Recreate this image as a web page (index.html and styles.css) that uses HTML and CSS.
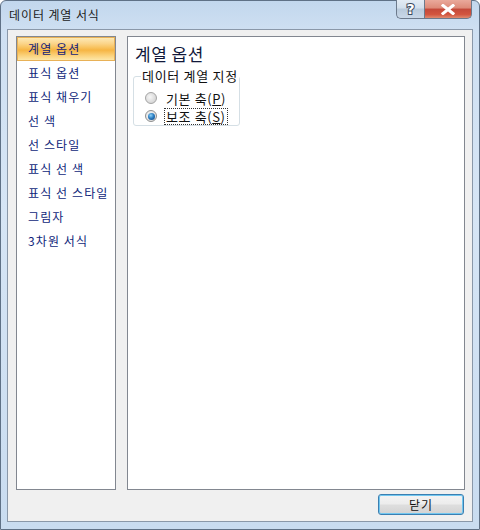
FILE: index.html
```html
<!DOCTYPE html>
<html>
<head>
<meta charset="utf-8">
<link rel="stylesheet" href="styles.css">
</head>
<body>
<div class="window">
  <div class="titlebar">
    <span class="title">데이터 계열 서식</span>
    <div class="caption-buttons">
      <div class="cap-btn help">?</div>
      <div class="cap-btn close">
        <svg width="16" height="11" viewBox="0 0 16 11"><path d="M3 1.5 L13 9.5 M13 1.5 L3 9.5" stroke="#fff" stroke-width="3" stroke-linecap="square" fill="none"/></svg>
      </div>
    </div>
  </div>
  <div class="client">
    <div class="panes">
      <ul class="nav">
        <li class="item selected">계열 옵션</li>
        <li class="item">표식 옵션</li>
        <li class="item">표식 채우기</li>
        <li class="item">선 색</li>
        <li class="item">선 스타일</li>
        <li class="item">표식 선 색</li>
        <li class="item">표식 선 스타일</li>
        <li class="item">그림자</li>
        <li class="item">3차원 서식</li>
      </ul>
      <div class="content">
        <h1 class="heading">계열 옵션</h1>
        <fieldset class="group">
          <legend class="legend">데이터 계열 지정</legend>
          <div class="radio-row">
            <span class="radio"></span>
            <span class="label">기본 축(<u>P</u>)</span>
          </div>
          <div class="radio-row">
            <span class="radio checked"><span class="dot"></span></span>
            <span class="label focus">보조 축(<u>S</u>)</span>
          </div>
        </fieldset>
      </div>
    </div>
    <div class="footer">
      <button class="btn">닫기</button>
    </div>
  </div>
</div>
</body>
</html>
```

FILE: styles.css
```css
* { box-sizing: border-box; }
html, body {
  margin: 0;
  padding: 0;
  width: 480px;
  height: 530px;
  overflow: hidden;
  background: #ffffff;
  font-family: "Noto Sans CJK KR", "Noto Sans", sans-serif;
  font-size: 12px;
}
.window {
  width: 480px;
  height: 530px;
  border: 1px solid #5f7186;
  border-radius: 6px 6px 0 0;
  background: linear-gradient(180deg, #c2d7ed 0%, #cfe0f2 6%, #d6e5f5 40%, #c9dcf0 100%);
  display: flex;
  flex-direction: column;
  padding: 0 6px 7px 6px;
}
.titlebar {
  height: 28px;
  display: flex;
  align-items: flex-start;
  justify-content: space-between;
  flex: none;
}
.title {
  margin-top: 6px;
  margin-left: 2px;
  font-size: 12px;
  letter-spacing: 0.9px;
  color: #1b1b1b;
  line-height: 16px;
}
.caption-buttons {
  display: flex;
  margin-right: 1px;
  margin-top: -1px;
}
.cap-btn {
  height: 19px;
  border: 1px solid #6c7a8c;
  border-top: none;
  display: flex;
  align-items: center;
  justify-content: center;
}
.help {
  width: 28px;
  border-right: none;
  border-radius: 0 0 0 5px;
  background: linear-gradient(180deg, #e3ebf4 0%, #d2dfec 45%, #b9cadc 50%, #c9d8e8 100%);
  color: #fff;
  font-family: "DejaVu Sans", sans-serif;
  font-weight: bold;
  font-size: 14px;
  line-height: 18px;
  -webkit-text-stroke: 2px #3b4a5e;
  paint-order: stroke fill;
}
.close {
  width: 48px;
  border-radius: 0 0 5px 0;
  background: linear-gradient(180deg, #e9a99b 0%, #dd8a78 45%, #c4493a 50%, #d2553f 80%, #e08a6f 100%);
}
.client {
  flex: 1;
  background: #f0f0f0;
  border: 1px solid #8a98a9;
  display: flex;
  flex-direction: column;
  padding: 6px 7px 5px 8px;
}
.panes {
  display: flex;
  gap: 11px;
  height: 454px;
}
.nav {
  list-style: none;
  margin: 0;
  padding: 0;
  width: 100px;
  background: #ffffff;
  border: 1px solid #828790;
}
.item {
  height: 24px;
  line-height: 23px;
  padding-left: 11px;
  color: #0f1f7a;
  font-size: 12px;
  letter-spacing: 1.1px;
  white-space: nowrap;
}
.item.selected {
  border: 1px solid #e8b157;
  background: linear-gradient(180deg, #fde9b5 0%, #fbd58a 25%, #f8c15b 45%, #f6b543 55%, #fbd27c 80%, #fde7a8 100%);
  color: #13217a;
  padding-left: 10px;
  line-height: 21px;
}
.content {
  flex: 1;
  background: #ffffff;
  border: 1px solid #828790;
  padding: 5px 5px;
}
.heading {
  margin: 0 0 0 2px;
  font-size: 17px;
  font-weight: normal;
  letter-spacing: 0.5px;
  line-height: 24px;
  color: #11183a;
}
.group {
  margin: 0;
  width: 107px;
  height: 58px;
  border: 1px solid #d5dfe5;
  border-radius: 3px;
  padding: 5px 0 0 11px;
  margin-top: 2px;
}
.legend {
  padding: 0 1px;
  margin-left: -4px;
  color: #111;
  font-size: 13px;
  letter-spacing: 0.7px;
  line-height: 16px;
  white-space: nowrap;
}
.radio-row {
  display: flex;
  align-items: center;
  height: 18px;
  gap: 7px;
}
.radio {
  width: 12px;
  height: 12px;
  border-radius: 50%;
  border: 1px solid #a4a4a4;
  background: radial-gradient(circle at 40% 40%, #f6f6f6 0%, #dcdcdc 60%, #cfcfcf 100%);
  display: flex;
  align-items: center;
  justify-content: center;
  flex: none;
}
.radio.checked {
  border-color: #8e8f8f;
  background: radial-gradient(circle at 40% 40%, #f4f4f4 0%, #d8d8d8 100%);
}
.dot {
  width: 7px;
  height: 7px;
  border-radius: 50%;
  background: radial-gradient(circle at 40% 35%, #8fd2f7 0%, #2d7fc2 45%, #0c3f7c 100%);
}
.label {
  color: #111;
  font-size: 13px;
  letter-spacing: 0.6px;
  line-height: 15px;
  padding: 0 1px;
  border: 1px solid transparent;
  white-space: nowrap;
}
.label.focus {
  border: 1px dotted #333;
}
.footer {
  flex: 1;
  display: flex;
  justify-content: flex-end;
  align-items: flex-start;
  padding-top: 4px;
  padding-right: 1px;
}
.btn {
  width: 86px;
  height: 21px;
  border: 1px solid #3c7fb1;
  border-radius: 3px;
  background: linear-gradient(180deg, #f4f4f4 0%, #ececec 48%, #dedede 52%, #d3d3d3 100%);
  box-shadow: inset 0 0 0 1px #71c7f0;
  font-family: "Noto Sans CJK KR", sans-serif;
  font-size: 12px;
  letter-spacing: 1px;
  color: #111;
  padding: 0;
  line-height: 18px;
}
u { text-decoration: underline; }
```
